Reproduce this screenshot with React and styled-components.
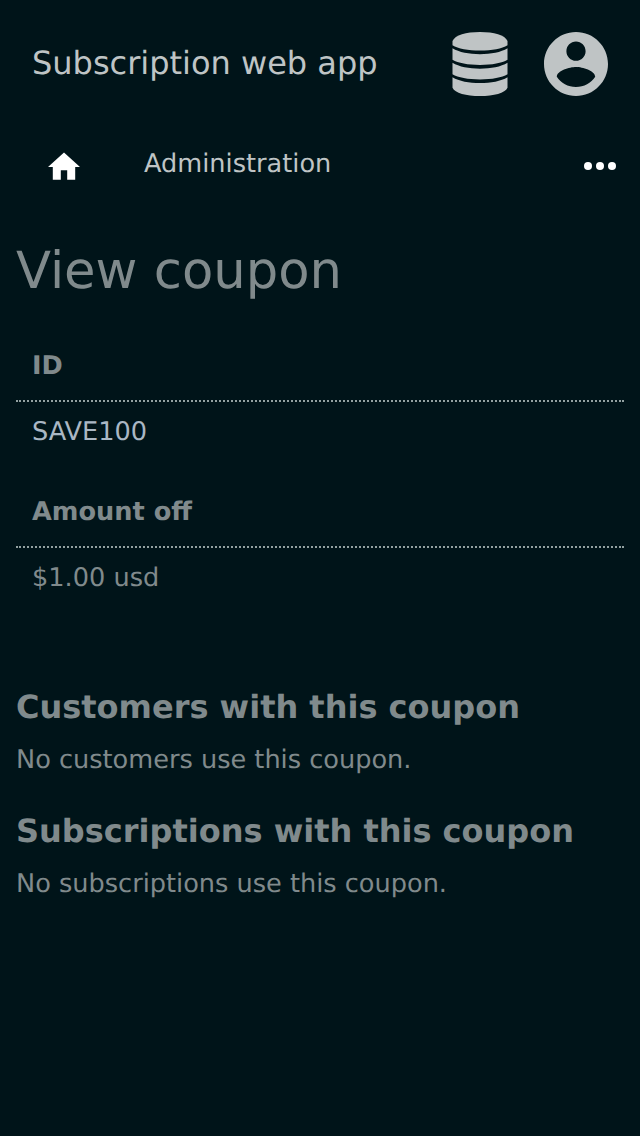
import React from 'react';
import styled, { createGlobalStyle } from 'styled-components';

const Global = createGlobalStyle`
  * { box-sizing: border-box; }
  html, body { margin: 0; background: #001419; }
  body {
    font-family: "DejaVu Sans", sans-serif;
    font-size: 26px;
    color: #808a8c;
    text-rendering: geometricPrecision;
  }
`;
const Page = styled.div`
  min-height: 1136px;
  background: #001419;
`;
const Header = styled.header`
  display: flex;
  align-items: center;
  height: 128px;
  padding: 0 32px;
  color: #bfc4c5;
`;
const Brand = styled.div`
  flex: 1;
  margin-top: -2px;
  font-size: 32px;
  line-height: 38px;
`;
const MenuIcon = styled.svg`
  display: block;
  width: ${(p) => p.$width}px;
  height: 64px;
  margin-left: ${(p) => p.$gap || 0}px;
  fill: currentColor;
`;
const Nav = styled.nav`
  display: flex;
  align-items: center;
  height: 76px;
  padding: 0 24px 0 48px;
  color: #fff;
`;
const NavIcon = styled.svg`
  display: block;
  width: 32px;
  height: 32px;
  fill: currentColor;
`;
const NavLink = styled.a`
  flex: 1;
  margin: -4px 0 0 64px;
  color: #bfc4c5;
  font-size: 25.6px;
  line-height: 30px;
`;
const Content = styled.main`
  padding: 37px 16px 0;
`;
const Title = styled.h1`
  margin: 0 0 31px;
  font-size: 51.2px;
  font-weight: 400;
  line-height: 60px;
`;
const Field = styled.section`
  margin-bottom: 16px;
`;
const Label = styled.div`
  height: 70px;
  padding: 19px 16px 0;
  border-bottom: 2px dotted #93a1a1;
  font-size: 25.6px;
  font-weight: 700;
  line-height: 30px;
`;
const Value = styled.div`
  height: 60px;
  padding: 15px 16px 0;
  font-size: 25.6px;
  line-height: 30px;
  color: ${(p) => (p.$bright ? '#aab7c4' : 'inherit')};
`;
const Heading = styled.h2`
  margin: 0;
  font-size: 32px;
  line-height: 38px;
`;
const Note = styled.p`
  margin: 19px 0 37px;
  font-size: 25.6px;
  line-height: 30px;
`;
const Related = styled.div`
  padding-top: 64px;
`;

export default function App() {
  return (
    <Page>
      <Global />
      <Header>
        <Brand>Subscription web app</Brand>
        <MenuIcon $width={56} viewBox="0 0 56 64">
          <path d="M.5 9C3 3 14 0 28 0s25 3 27.500 9v4.200C50 16.800 40 18.500 28 18.500S6 16.800 .5 13.200z" />
          <path d="M.5 16.300C7 20.300 17 22.200 28 22.200S49 20.300 55.500 16.300v11.500C50 31.200 40 32.900 28 32.900S6 31.200 .5 27.800z" />
          <path d="M.5 30.800C7 34.800 17 36.700 28 36.700S49 34.800 55.500 30.800v11.500C50 45.700 40 47.400 28 47.400S6 45.700 .5 42.300z" />
          <path d="M.5 45.200C7 49.200 17 51.100 28 51.100S49 49.200 55.500 45.200v10.500C53 61 42 64 28 64S3 61 .5 55.700z" />
        </MenuIcon>
        <MenuIcon $width={64} $gap={36} viewBox="2 2 20 20">
          <path d="M12 2C6.480 2 2 6.480 2 12s4.480 10 10 10 10-4.480 10-10S17.520 2 12 2zm0 3c1.660 0 3 1.340 3 3s-1.340 3-3 3-3-1.340-3-3 1.340-3 3-3zm0 14.200c-2.500 0-4.710-1.280-6-3.220.03-1.990 4-3.080 6-3.080 1.990 0 5.970 1.090 6 3.080-1.290 1.940-3.500 3.220-6 3.220z" />
        </MenuIcon>
      </Header>
      <Nav>
        <NavIcon viewBox="2 1.4 20 20"><path d="M10 20v-6h4v6h5v-8h3L12 3 2 12h3v8z" /></NavIcon>
        <NavLink>Administration</NavLink>
        <NavIcon viewBox="0 0 32 32"><circle cx="4" cy="16" r="4" /><circle cx="16" cy="16" r="4" /><circle cx="28" cy="16" r="4" /></NavIcon>
      </Nav>
      <Content>
        <Title>View coupon</Title>
        <Field><Label>ID</Label><Value $bright>SAVE100</Value></Field>
        <Field><Label>Amount off</Label><Value>$1.00 usd</Value></Field>
        <Related>
          <Heading>Customers with this coupon</Heading>
          <Note>No customers use this coupon.</Note>
          <Heading>Subscriptions with this coupon</Heading>
          <Note>No subscriptions use this coupon.</Note>
        </Related>
      </Content>
    </Page>
  );
}
